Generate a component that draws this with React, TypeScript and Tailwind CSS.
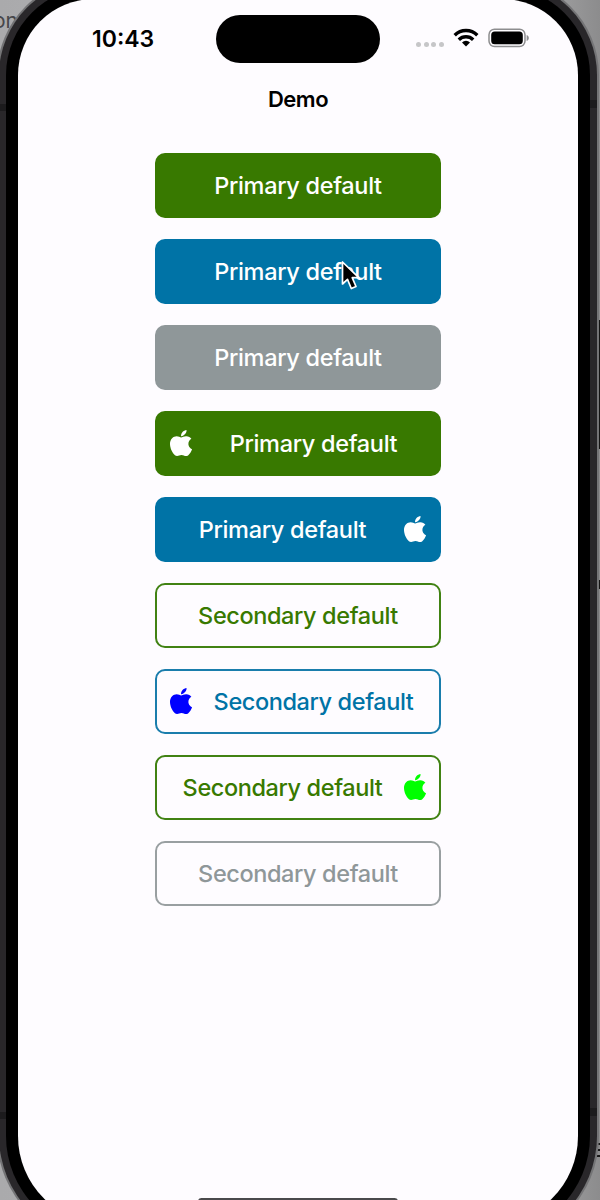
import React from "react";
import clsx from "clsx";
import { FaApple } from "react-icons/fa";

type Tone = "green" | "blue" | "gray";

interface DemoButtonProps {
  tone: Tone;
  outline?: boolean;
  icon?: "left" | "right";
  iconClass?: string;
}

const filled: Record<Tone, string> = {
  green: "bg-[#387900] text-white",
  blue: "bg-[#0073a6] text-white",
  gray: "bg-[#8f9799] text-white",
};

const outlined: Record<Tone, string> = {
  green: "border-2 border-[#418213] text-[#387900]",
  blue: "border-2 border-[#1a7dac] text-[#0073a6]",
  gray: "border-2 border-[#999fa1] text-[#8f9799]",
};

function DemoButton({ tone, outline = false, icon, iconClass }: DemoButtonProps) {
  const glyph = (
    <span className={clsx("flex w-[22px] shrink-0 justify-center pb-[1px]", iconClass)}>
      <FaApple size={30} className="shrink-0" />
    </span>
  );
  return (
    <button
      type="button"
      className={clsx(
        "flex h-[65px] w-[286px] items-center rounded-[10px] text-[23.5px] font-medium leading-none",
        outline ? outlined[tone] : filled[tone],
        icon === "left" && (outline ? "pl-[13px] pr-[4px]" : "pl-[15px] pr-[6px]"),
        icon === "right" && (outline ? "pl-[4px] pr-[13px]" : "pl-[6px] pr-[15px]"),
      )}
    >
      {icon === "left" && glyph}
      <span
        className={clsx(
          "flex-1 whitespace-nowrap text-center",
          outline ? "tracking-[-0.4px]" : "tracking-[-0.32px]",
        )}
      >
        {outline ? "Secondary default" : "Primary default"}
      </span>
      {icon === "right" && glyph}
    </button>
  );
}

function StatusBar() {
  return (
    <div className="flex h-[77px] items-center">
      <span className="ml-[74px] w-[124px] pt-[3px] text-[23px] font-semibold leading-none">10:43</span>
      <div className="mt-[2px] h-[48px] w-[164px] rounded-full bg-black" />
      <div className="ml-[36px] flex h-[20px] items-end gap-[2.7px]">
        {[0, 1, 2, 3].map((i) => (
          <span key={i} className="mb-[1px] size-[5px] rounded-full bg-[#c6c6c8]" />
        ))}
      </div>
      <svg className="ml-[9px]" width="26" height="20" viewBox="0 0 26 20" fill="none" stroke="#000" strokeWidth="3.4">
        <path d="M1.7 7.2a16 16 0 0 1 22.6 0" />
        <path d="M5.8 11.8a10.2 10.2 0 0 1 14.4 0" />
        <path d="M13 18.5l-4-4a5.7 5.7 0 0 1 8 0z" fill="#000" stroke="none" />
      </svg>
      <svg className="ml-[9px]" width="41" height="20" viewBox="0 0 41 20">
        <rect x="1" y="1.2" width="36" height="17.4" rx="5.5" fill="none" stroke="#8d8d8f" strokeWidth="1.5" />
        <rect x="3.2" y="3.5" width="31.6" height="12.8" rx="3.5" fill="#000" />
        <path d="M38.6 7v6c1.6-.7 2.2-1.8 2.2-3s-.6-2.3-2.2-3z" fill="#8d8d8f" />
      </svg>
    </div>
  );
}

function Cursor() {
  return (
    <svg className="absolute left-[323px] top-[261px]" width="20" height="32" viewBox="0 0 20 32">
      <path
        d="M1.5 2v22l5-4.6 3.8 9.1 4.7-2-3.8-8.8h6.6z"
        fill="#000"
        stroke="#fff"
        strokeWidth="1.7"
        strokeLinejoin="round"
      />
    </svg>
  );
}

export default function App() {
  return (
    <div className="relative h-[1200px] w-[600px] overflow-hidden bg-[linear-gradient(90deg,#aaaaac_0%,#bbbbbd_80%,#8c8c8d_100%)] font-['Inter','Liberation_Sans',sans-serif] text-black">
      <span className="absolute left-[-7px] top-[10px] text-[21px] leading-none text-[#46464a]">on</span>
      <span className="absolute left-[597px] top-[1143px] h-[2px] w-[3px] bg-[#181818]" />
      <span className="absolute left-[597px] top-[1149px] h-[2px] w-[3px] bg-[#181818]" />
      <span className="absolute left-[597px] top-[1155px] h-[2px] w-[3px] bg-[#181818]" />
      <span className="absolute left-[598px] top-[320px] h-[129px] w-[2px] bg-[#151515]" />
      <span className="absolute left-[598px] top-[580px] h-[9px] w-[2px] bg-[#151515]" />

      <div className="relative ml-[-3px] mt-[-22px] h-[1267px] w-[602px] rounded-b-[109px] rounded-t-[97px] bg-[#747476] p-[2px]">
        <div className="h-full rounded-b-[107px] rounded-t-[95px] bg-[#29272a] p-[7px]">
          <div className="h-full rounded-b-[100px] rounded-t-[88px] bg-black p-[12px]">
            <main className="relative h-[1225px] w-[560px] overflow-hidden rounded-b-[88px] rounded-t-[76px] bg-[#fefcff]">
              <StatusBar />
              <h1 className="mt-[12px] text-center text-[22px] font-semibold leading-[22px] tracking-[-0.5px]">Demo</h1>
              <div className="mt-[43.3px] flex flex-col items-center gap-[21px]">
                <DemoButton tone="green" />
                <DemoButton tone="blue" />
                <DemoButton tone="gray" />
                <DemoButton tone="green" icon="left" />
                <DemoButton tone="blue" icon="right" />
                <DemoButton tone="green" outline />
                <DemoButton tone="blue" outline icon="left" iconClass="text-[#0000ff]" />
                <DemoButton tone="green" outline icon="right" iconClass="text-[#00ff00]" />
                <DemoButton tone="gray" outline />
              </div>
              <div className="mx-auto mt-[291.7px] h-[7px] w-[200px] rounded-full bg-[#4a4a4c]" />
              <Cursor />
            </main>
          </div>
        </div>
        <span className="absolute left-[2px] top-[126px] h-[7px] w-[7px] bg-[#1c1b1d]" />
        <span className="absolute left-[2px] top-[1134px] h-[7px] w-[7px] bg-[#1c1b1d]" />
        <span className="absolute right-[2px] top-[122px] h-[8px] w-[7px] bg-[#1c1b1d]" />
        <span className="absolute right-[2px] top-[1130px] h-[8px] w-[7px] bg-[#1c1b1d]" />
      </div>
    </div>
  );
}
